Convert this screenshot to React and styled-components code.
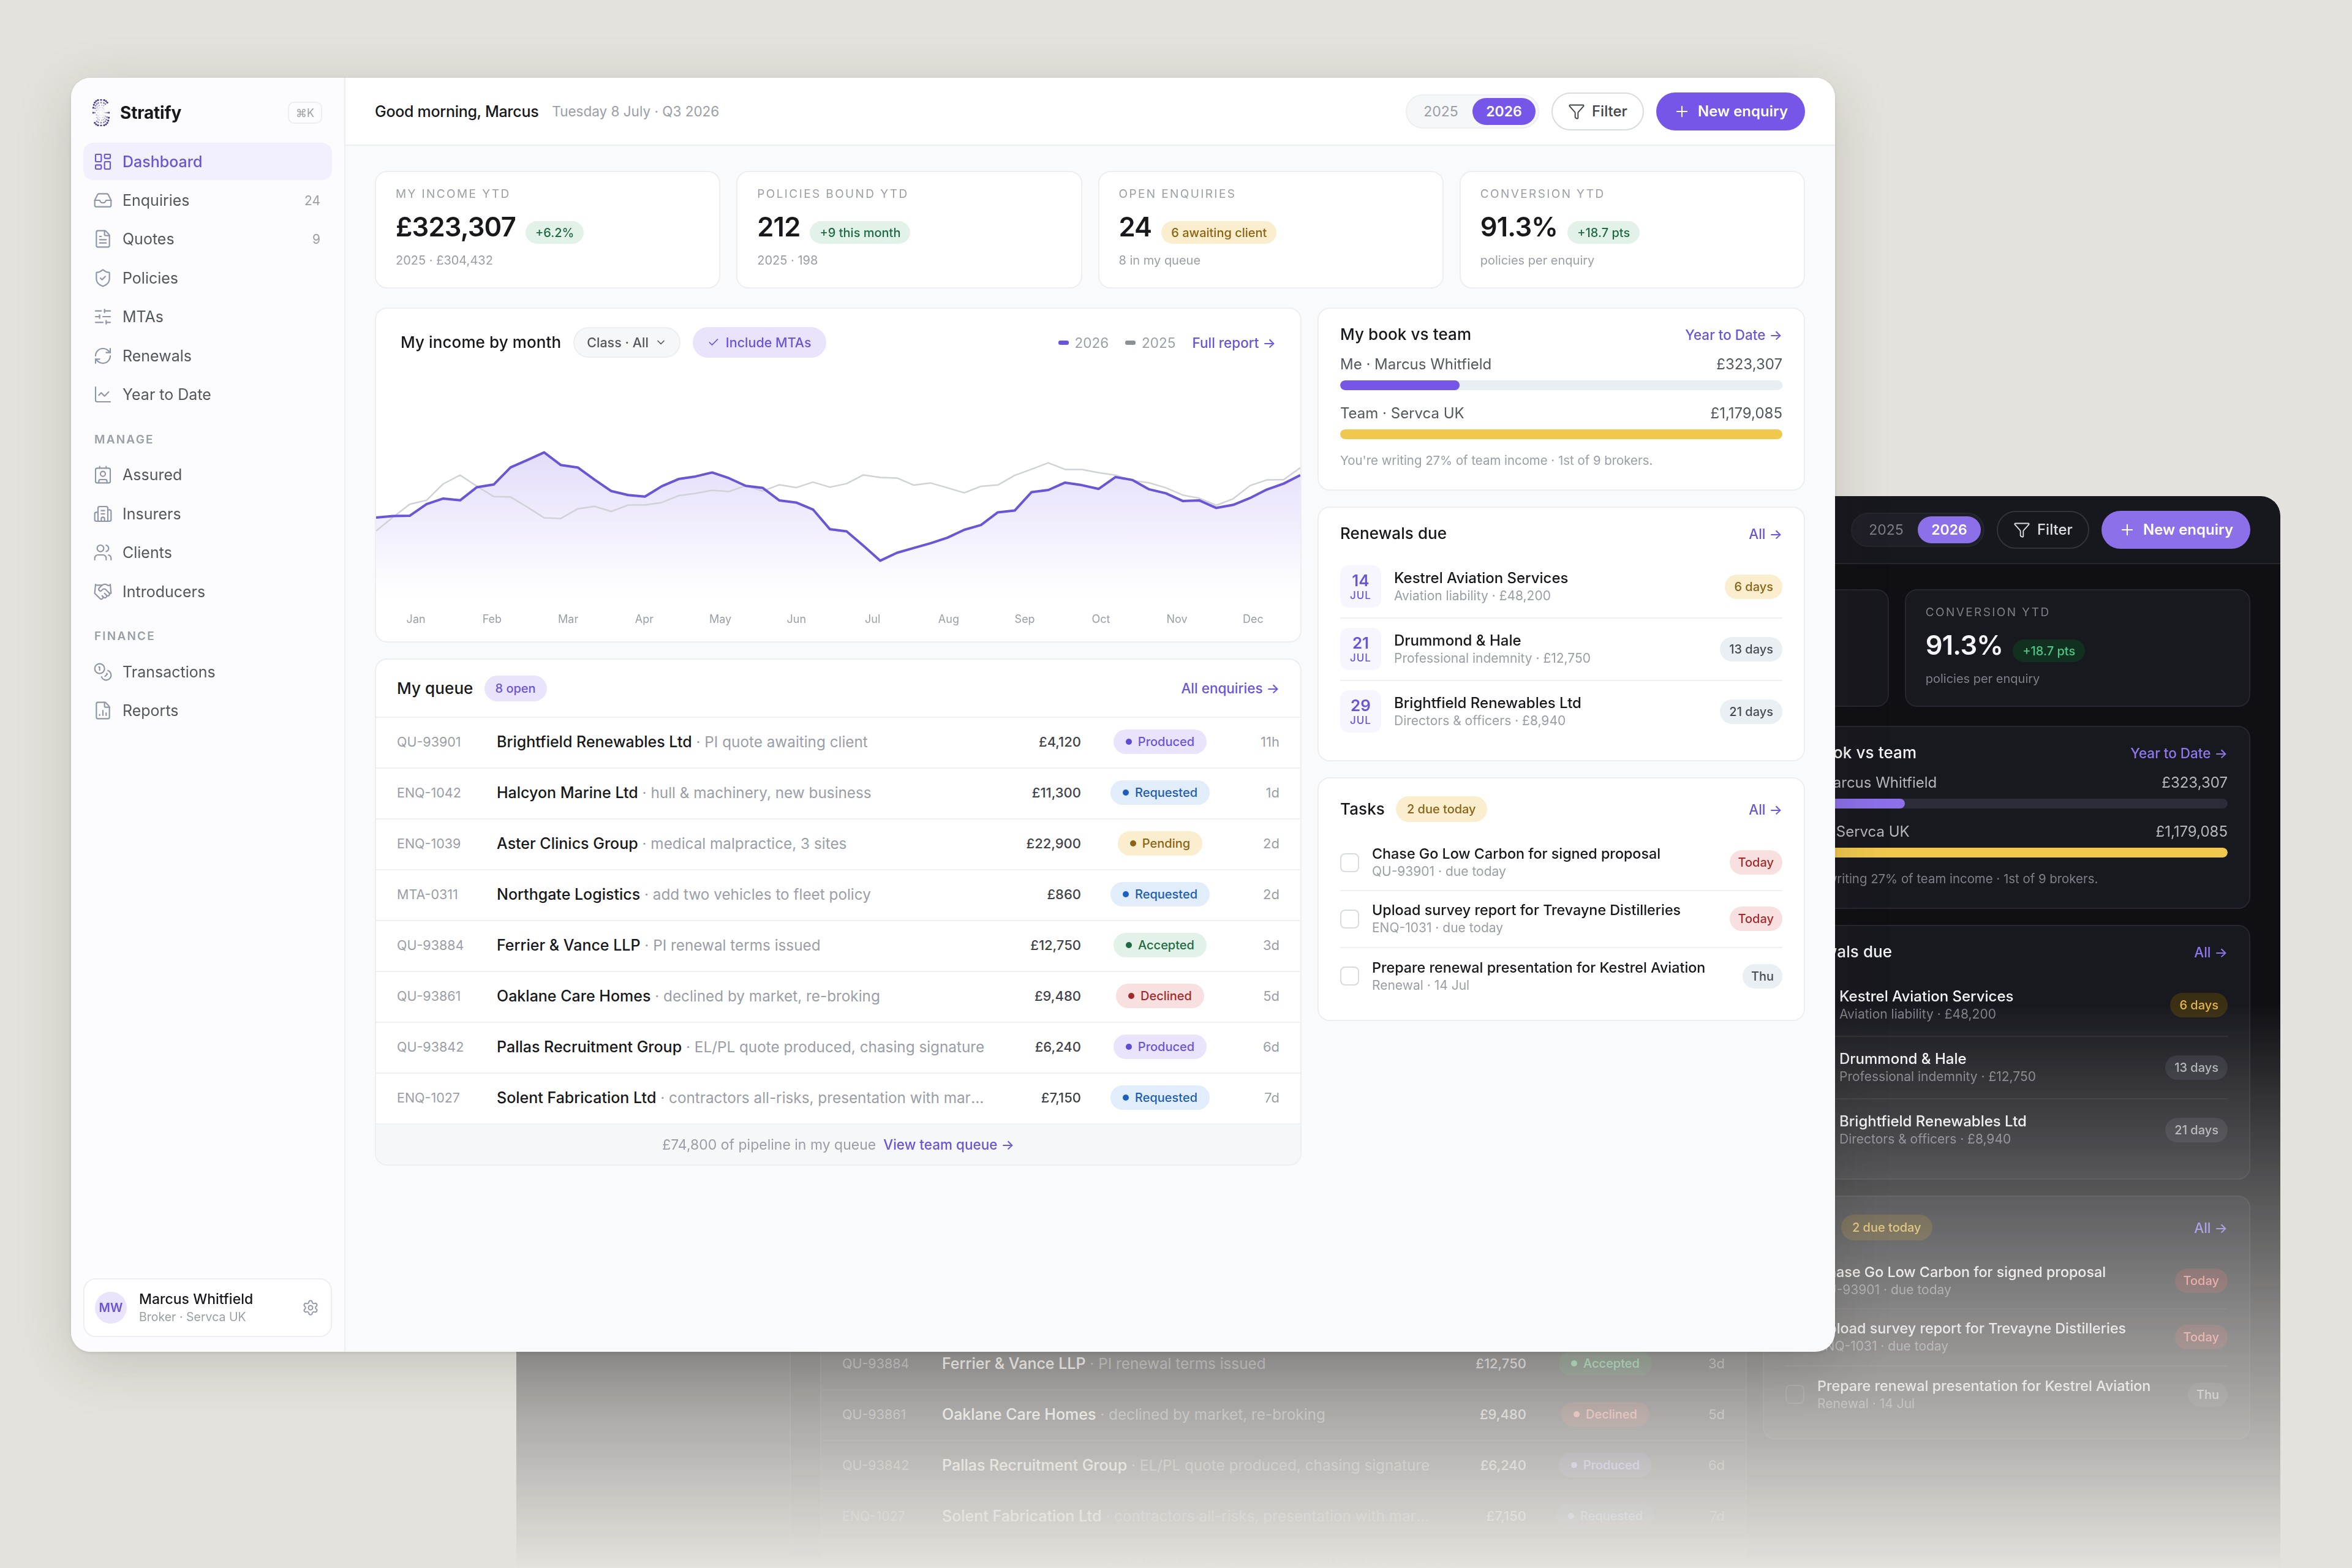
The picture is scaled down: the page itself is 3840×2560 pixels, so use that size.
import React from 'react';
import styled, { createGlobalStyle, ThemeProvider } from 'styled-components';
import {
  LayoutDashboard, Inbox, FileText, ShieldCheck, SlidersHorizontal, RefreshCw, ChartLine,
  Contact, Building2, Users, Handshake, Coins, FileChartColumn, Settings, Funnel, Plus, Check, ChevronDown,
} from 'lucide-react';

const lightTheme = {
  sidebar: '#fcfcfe', bar: '#ffffff', body: '#f9fafb', card: '#ffffff', line: '#eceef1', rowLine: '#eef0f2',
  text: '#17181c', soft: '#53575e', muted: '#9a9ea6', accent: '#6a55d6', primary: '#7556e8', active: '#f2effe',
  toggle: '#f6f7f8', filterLine: '#d8dbdf', filterText: '#3f4349', track: '#e9eef2', amber: '#f0c84e',
  tile: '#f7f5fe', soft2: '#e9e3fc', foot: '#f6f7f9', box: '#d8dbdf', icon: '#8e95a6', amount: '#3f4349', line25: '#cfd2d6',
  tones: {
    violet: ['#e9e3fc', '#6a55d6', '#5f4bd8'], blue: ['#e1edfb', '#1e5cb0', '#1d5fc0'], amber: ['#fbeecf', '#8a6414', '#8a6414'],
    green: ['#e3f2e9', '#1f6a43', '#1f6a43'], red: ['#f9e0e0', '#a32a2a', '#a32a2a'], grey: ['#e9eff3', '#454b52', '#454b52'],
  },
};

const darkTheme = {
  sidebar: '#16161c', bar: '#17171e', body: '#0f0f14', card: '#18181f', line: '#26262e', rowLine: '#26262e',
  text: '#f5f5f7', soft: '#b6b6be', muted: '#7f7f89', accent: '#8f78ee', primary: '#8b70ea', active: '#26223f',
  toggle: '#1f1f27', filterLine: '#33333c', filterText: '#dcdce2', track: '#2c2c38', amber: '#f0c84e',
  tile: '#25223a', soft2: '#2f2950', foot: '#1d1d25', box: '#3a3a44', icon: '#7f7f89', amount: '#c6c6ce', line25: '#5f5f69',
  tones: {
    violet: ['#2f2950', '#a493f2', '#a493f2'], blue: ['#1a2a44', '#7aa8ee', '#7aa8ee'], amber: ['#3a2f12', '#e3b64c', '#e3b64c'],
    green: ['#12301f', '#4fc587', '#4fc587'], red: ['#431c20', '#ef7b7b', '#ef7b7b'], grey: ['#2a2a33', '#b0b0b8', '#b0b0b8'],
  },
};

const GlobalStyle = createGlobalStyle`
  html, body { margin: 0; padding: 0; background: #e4e2dc; }
  * { box-sizing: border-box; }
  body { font-family: Inter, "Liberation Sans", sans-serif; }
`;

const Scene = styled.div`
  position: relative;
  width: 3840px;
  height: 2560px;
  overflow: hidden;
  background: #e4e2dc;
`;

const Win = styled.div`
  display: flex;
  width: 2880px;
  height: 2080px;
  overflow: hidden;
  border-radius: 32px;
  background: ${p => p.theme.body};
  color: ${p => p.theme.text};
`;

const FrontWin = styled(Win)`
  position: absolute;
  left: 116px;
  top: 127px;
  box-shadow: 0 20px 90px rgba(40, 38, 30, 0.17), 0 2px 6px rgba(40, 38, 30, 0.1);
`;

const BackWin = styled(Win)`
  position: absolute;
  left: 843px;
  top: 810px;
  -webkit-mask-image: linear-gradient(to bottom, #000 830px, transparent 1750px);
  mask-image: linear-gradient(to bottom, #000 830px, transparent 1750px);
`;

/* sidebar */
const Sidebar = styled.aside`
  flex: 0 0 448px;
  display: flex;
  flex-direction: column;
  padding: 0 20px 24px;
  background: ${p => p.theme.sidebar};
  border-right: 2px solid ${p => p.theme.line};
`;

const Brand = styled.div`
  flex: 0 0 106px;
  display: flex;
  align-items: center;
  gap: 17px;
  padding: 8px 16px 0 15px;
`;

const BrandName = styled.span`
  flex: 1;
  font-size: 28px;
  font-weight: 700;
  letter-spacing: -0.2px;
`;

const Kbd = styled.span`
  width: 56px;
  height: 36px;
  display: flex;
  align-items: center;
  justify-content: center;
  border: 2px solid ${p => p.theme.line};
  border-radius: 10px;
  font-size: 18px;
  color: ${p => p.theme.muted};
`;

const NavList = styled.nav`
  display: flex;
  flex-direction: column;
  gap: 2px;
`;

const NavItem = styled.a`
  display: flex;
  align-items: center;
  gap: 16px;
  height: 61.4px;
  padding: 0 19px 0 16px;
  border-radius: 16px;
  font-size: 25px;
  font-weight: ${p => (p.$active ? 500 : 400)};
  color: ${p => (p.$active ? p.theme.accent : p.theme.soft)};
  background: ${p => (p.$active ? p.theme.active : 'transparent')};
  svg { color: ${p => (p.$active ? p.theme.accent : p.theme.icon)}; flex: none; }
`;

const NavLabel = styled.span`
  flex: 1;
`;

const NavCount = styled.span`
  font-size: 21px;
  color: ${p => p.theme.muted};
`;

const SectionLabel = styled.div`
  margin: 31px 0 15px;
  padding-left: 18px;
  font-size: 19px;
  line-height: 24px;
  font-weight: 600;
  letter-spacing: 2.2px;
  color: ${p => p.theme.muted};
`;

const UserCard = styled.div`
  margin-top: auto;
  height: 96px;
  display: flex;
  align-items: center;
  gap: 20px;
  padding: 0 19px 0 17px;
  background: ${p => p.theme.card};
  border: 2px solid ${p => p.theme.line};
  border-radius: 20px;
  svg { color: ${p => p.theme.icon}; flex: none; }
`;

const Avatar = styled.div`
  width: 52px;
  height: 52px;
  flex: none;
  border-radius: 50%;
  display: flex;
  align-items: center;
  justify-content: center;
  background: ${p => p.theme.soft2};
  color: ${p => p.theme.accent};
  font-size: 20px;
  font-weight: 600;
`;

const UserText = styled.div`
  flex: 1;
  min-width: 0;
`;

const UserName = styled.div`
  font-size: 23px;
  line-height: 30px;
  font-weight: 500;
`;

const UserRole = styled.div`
  font-size: 19.5px;
  line-height: 28px;
  color: ${p => p.theme.muted};
`;

/* main column */
const Main = styled.main`
  flex: 1;
  min-width: 0;
  display: flex;
  flex-direction: column;
`;

const Topbar = styled.header`
  flex: 0 0 111px;
  display: flex;
  align-items: center;
  padding: 0 49px 0 48px;
  background: ${p => p.theme.bar};
  border-bottom: 2px solid ${p => p.theme.line};
`;

const Greeting = styled.span`
  margin-right: 22px;
  font-size: 25px;
  font-weight: 500;
  letter-spacing: -0.3px;
`;

const DateText = styled.span`
  flex: 1;
  font-size: 22.5px;
  color: ${p => p.theme.muted};
`;

const TopActions = styled.div`
  display: flex;
  align-items: center;
  gap: 20px;
`;

const YearToggle = styled.div`
  display: flex;
  align-items: center;
  height: 56px;
  padding: 4px;
  background: ${p => p.theme.toggle};
  border: 2px solid ${p => p.theme.line};
  border-radius: 28px;
`;

const YearOption = styled.span`
  width: 103px;
  height: 44px;
  display: flex;
  align-items: center;
  justify-content: center;
  border-radius: 22px;
  font-size: 23px;
  font-weight: ${p => (p.$on ? 600 : 400)};
  color: ${p => (p.$on ? '#fff' : p.theme.muted)};
  background: ${p => (p.$on ? p.theme.primary : 'transparent')};
`;

const FilterBtn = styled.button`
  width: 151px;
  height: 62px;
  display: flex;
  align-items: center;
  justify-content: center;
  gap: 11px;
  padding: 0;
  font: 500 24px Inter, sans-serif;
  color: ${p => p.theme.filterText};
  background: ${p => p.theme.bar};
  border: 2px solid ${p => p.theme.filterLine};
  border-radius: 31px;
`;

const PrimaryBtn = styled.button`
  height: 62px;
  display: flex;
  align-items: center;
  gap: 12px;
  padding: 0 28px;
  font: 600 24px Inter, sans-serif;
  color: #fff;
  background: ${p => p.theme.primary};
  border: 0;
  border-radius: 31px;
`;

const Content = styled.div`
  flex: 1;
  padding: 41px 49px 0 48px;
`;

const KpiRow = styled.section`
  display: grid;
  grid-template-columns: repeat(4, 1fr);
  gap: 26px;
  margin-bottom: 31px;
`;

const Card = styled.div`
  background: ${p => p.theme.card};
  border: 2px solid ${p => p.theme.line};
  border-radius: 20px;
`;

const Kpi = styled(Card)`
  height: 192px;
  padding: 24px 32px 0;
`;

const KpiLabel = styled.div`
  font-size: 19px;
  line-height: 24px;
  font-weight: 400;
  letter-spacing: 2.4px;
  color: ${p => p.theme.muted};
`;

const KpiValueRow = styled.div`
  display: flex;
  align-items: flex-end;
  gap: 16px;
  height: 56px;
  margin: 13px 0;
`;

const KpiValue = styled.span`
  font-size: 43.5px;
  line-height: 56px;
  font-weight: 600;
  letter-spacing: -0.8px;
`;

const Chip = styled.span`
  display: inline-flex;
  align-items: center;
  height: ${p => p.$h || 37}px;
  padding: 0 ${p => p.$pad || 16}px;
  border-radius: 21px;
  font-size: 20px;
  font-weight: 500;
  white-space: nowrap;
  background: ${p => p.theme.tones[p.$tone][0]};
  color: ${p => p.theme.tones[p.$tone][1]};
`;

const KpiSub = styled.div`
  font-size: 20px;
  line-height: 28px;
  color: ${p => p.theme.muted};
`;

const Columns = styled.section`
  display: grid;
  grid-template-columns: 1513px 1fr;
  gap: 26px;
  align-items: start;
`;

const Stack = styled.div`
  display: flex;
  flex-direction: column;
  gap: 26px;
`;

/* chart */
const ChartCard = styled(Card)`
  height: 547px;
  overflow: hidden;
  display: flex;
  flex-direction: column;
`;

const ChartHead = styled.div`
  display: flex;
  align-items: center;
  gap: 20px;
  padding: 30px 40px 0;
`;

const PanelTitle = styled.h3`
  margin: 0;
  font-size: 26px;
  line-height: 34px;
  font-weight: 500;
  letter-spacing: 0.1px;
`;

const OptionPill = styled.span`
  height: 50px;
  display: inline-flex;
  align-items: center;
  gap: 10px;
  padding: 0 ${p => (p.$on ? 22 : 20)}px;
  border-radius: 25px;
  font-size: 21.5px;
  font-weight: 500;
  background: ${p => (p.$on ? p.theme.soft2 : p.theme.toggle)};
  color: ${p => (p.$on ? p.theme.accent : p.theme.soft)};
  border: 2px solid ${p => (p.$on ? p.theme.soft2 : p.theme.line)};
`;

const Legend = styled.div`
  margin-left: auto;
  display: flex;
  align-items: center;
  gap: 27px;
`;

const LegendItem = styled.span`
  display: inline-flex;
  align-items: center;
  gap: 10px;
  font-size: 22.5px;
  color: ${p => p.theme.muted};
`;

const Swatch = styled.i`
  width: 17px;
  height: 7px;
  border-radius: 3px;
  background: ${p => (p.$now ? p.theme.accent : '#8a9095')};
`;

const TextLink = styled.a`
  font-size: 22.5px;
  font-weight: 500;
  white-space: nowrap;
  color: ${p => p.theme.accent};
`;

const ChartSvg = styled.svg`
  display: block;
  width: 100%;
  height: 395px;
  margin-top: 6px;
  flex: none;
`;

const IncomeLine25 = styled.path`
  fill: none;
  stroke: ${p => p.theme.line25};
  stroke-width: 2.5;
  stroke-linejoin: round;
`;

const IncomeLine26 = styled.path`
  fill: none;
  stroke: ${p => p.theme.accent};
  stroke-width: 4;
  stroke-linejoin: round;
`;

const Months = styled.div`
  display: grid;
  grid-template-columns: repeat(12, 1fr);
  padding: 14px 15px 0 3px;
  font-size: 18px;
  line-height: 24px;
  text-align: center;
  color: ${p => p.theme.muted};
`;

/* queue */
const QueueHead = styled.div`
  height: 95px;
  display: flex;
  align-items: center;
  justify-content: space-between;
  padding: 0 34px;
  border-bottom: 2px solid ${p => p.theme.rowLine};
`;

const Row = styled.div`
  height: 83px;
  display: flex;
  align-items: center;
  padding: 0 34px 4px;
  border-bottom: 2px solid ${p => p.theme.rowLine};
`;

const RowId = styled.span`
  flex: 0 0 163px;
  font-size: 21.5px;
  color: ${p => p.theme.muted};
`;

const RowMain = styled.span`
  flex: 1;
  min-width: 0;
  padding-right: 10px;
  font-size: 24.3px;
  white-space: nowrap;
  overflow: hidden;
  text-overflow: ellipsis;
  color: ${p => p.theme.muted};
`;

const RowName = styled.span`
  font-size: 25px;
  font-weight: 500;
  color: ${p => p.theme.text};
`;

const RowAmount = styled.span`
  flex: 0 0 140px;
  text-align: right;
  font-size: 22px;
  font-weight: 500;
  color: ${p => p.theme.amount};
`;

const StatusCell = styled.span`
  flex: 0 0 200px;
  margin-left: 29px;
  display: flex;
  justify-content: center;
`;

const Status = styled(Chip)`
  height: 40px;
  gap: 10px;
  padding: 0 20px;
  &::before {
    content: '';
    width: 10px;
    height: 10px;
    border-radius: 50%;
    background: ${p => p.theme.tones[p.$tone][2]};
  }
`;

const RowTime = styled.span`
  flex: 0 0 95px;
  text-align: right;
  font-size: 22px;
  color: ${p => p.theme.muted};
`;

const QueueFoot = styled.div`
  height: 65px;
  display: flex;
  align-items: center;
  justify-content: center;
  gap: 12px;
  font-size: 23px;
  color: ${p => p.theme.muted};
  background: ${p => p.theme.foot};
  border-radius: 0 0 18px 18px;
`;

/* right column */
const SidePanel = styled(Card)`
  padding: 25px 35px ${p => p.$pb}px;
`;

const SideHead = styled.div`
  display: flex;
  align-items: center;
  justify-content: space-between;
  min-height: 34px;
`;

const TaskHead = styled(SideHead)`
  height: 42px;
  margin: 4px 0 21px;
`;

const TitleGroup = styled.div`
  display: flex;
  align-items: center;
  gap: 18px;
`;

const MeterRow = styled.div`
  display: flex;
  justify-content: space-between;
  margin-top: ${p => p.$mt}px;
  font-size: 24px;
  line-height: 30px;
  color: ${p => p.theme.soft};
`;

const Track = styled.div`
  height: 16px;
  margin-top: 11px;
  border-radius: 8px;
  overflow: hidden;
  background: ${p => p.theme.track};
`;

const Fill = styled.div`
  height: 100%;
  border-radius: 8px;
  background: ${p => (p.$amber ? p.theme.amber : p.theme.primary)};
`;

const Note = styled.p`
  margin: 20px 0 0;
  font-size: 20.4px;
  line-height: 30px;
  color: ${p => p.theme.muted};
`;

const RenewalList = styled.div`
  margin-top: 19px;
`;

const Renewal = styled.div`
  display: flex;
  align-items: center;
  gap: 21px;
  padding: 16px 0;
  border-bottom: ${p => (p.$last ? 'none' : `2px solid ${p.theme.rowLine}`)};
  margin-bottom: ${p => (p.$last ? 0 : '-1px')};
`;

const DateTile = styled.div`
  flex: 0 0 67px;
  height: 69px;
  display: flex;
  flex-direction: column;
  align-items: center;
  justify-content: center;
  border-radius: 14px;
  background: ${p => p.theme.tile};
  color: ${p => p.theme.accent};
`;

const TileDay = styled.span`
  font-size: 26px;
  line-height: 28px;
  font-weight: 600;
`;

const TileMonth = styled.span`
  font-size: 17px;
  line-height: 20px;
  font-weight: 500;
  letter-spacing: 1px;
`;

const ItemText = styled.div`
  flex: 1;
  min-width: 0;
`;

const ItemTitle = styled.div`
  font-size: ${p => p.$size || 24}px;
  line-height: 29px;
  font-weight: 500;
`;

const ItemSub = styled.div`
  font-size: 21px;
  line-height: 29px;
  color: ${p => p.theme.muted};
`;

const TaskRow = styled.div`
  height: 92.3px;
  display: flex;
  align-items: center;
  gap: 21px;
  border-bottom: ${p => (p.$last ? 'none' : `2px solid ${p.theme.rowLine}`)};
`;

const CheckBox = styled.span`
  flex: 0 0 31px;
  height: 31px;
  border: 2px solid ${p => p.theme.box};
  border-radius: 8px;
`;

const nav = [
  [LayoutDashboard, 'Dashboard'], [Inbox, 'Enquiries', 24], [FileText, 'Quotes', 9], [ShieldCheck, 'Policies'],
  [SlidersHorizontal, 'MTAs'], [RefreshCw, 'Renewals'], [ChartLine, 'Year to Date'],
];
const manageNav = [[Contact, 'Assured'], [Building2, 'Insurers'], [Users, 'Clients'], [Handshake, 'Introducers']];
const financeNav = [[Coins, 'Transactions'], [FileChartColumn, 'Reports']];

const kpis = [
  { label: 'MY INCOME YTD', value: '£323,307', chip: '+6.2%', tone: 'green', sub: '2025 · £304,432' },
  { label: 'POLICIES BOUND YTD', value: '212', chip: '+9 this month', tone: 'green', sub: '2025 · 198' },
  { label: 'OPEN ENQUIRIES', value: '24', chip: '6 awaiting client', tone: 'amber', sub: '8 in my queue' },
  { label: 'CONVERSION YTD', value: '91.3%', chip: '+18.7 pts', tone: 'green', sub: 'policies per enquiry' },
];

const queue = [
  ['QU-93901', 'Brightfield Renewables Ltd', 'PI quote awaiting client', '£4,120', 'Produced', 'violet', '11h'],
  ['ENQ-1042', 'Halcyon Marine Ltd', 'hull & machinery, new business', '£11,300', 'Requested', 'blue', '1d'],
  ['ENQ-1039', 'Aster Clinics Group', 'medical malpractice, 3 sites', '£22,900', 'Pending', 'amber', '2d'],
  ['MTA-0311', 'Northgate Logistics', 'add two vehicles to fleet policy', '£860', 'Requested', 'blue', '2d'],
  ['QU-93884', 'Ferrier & Vance LLP', 'PI renewal terms issued', '£12,750', 'Accepted', 'green', '3d'],
  ['QU-93861', 'Oaklane Care Homes', 'declined by market, re-broking', '£9,480', 'Declined', 'red', '5d'],
  ['QU-93842', 'Pallas Recruitment Group', 'EL/PL quote produced, chasing signature', '£6,240', 'Produced', 'violet', '6d'],
  ['ENQ-1027', 'Solent Fabrication Ltd', 'contractors all-risks, presentation with markets this week', '£7,150', 'Requested', 'blue', '7d'],
];

const renewals = [
  ['14', 'Kestrel Aviation Services', 'Aviation liability · £48,200', '6 days', 'amber'],
  ['21', 'Drummond & Hale', 'Professional indemnity · £12,750', '13 days', 'grey'],
  ['29', 'Brightfield Renewables Ltd', 'Directors & officers · £8,940', '21 days', 'grey'],
];

const tasks = [
  ['Chase Go Low Carbon for signed proposal', 'QU-93901 · due today', 'Today', 'red'],
  ['Upload survey report for Trevayne Distilleries', 'ENQ-1031 · due today', 'Today', 'red'],
  ['Prepare renewal presentation for Kestrel Aviation', 'Renewal · 14 Jul', 'Thu', 'grey'],
];

const months = ['Jan', 'Feb', 'Mar', 'Apr', 'May', 'Jun', 'Jul', 'Aug', 'Sep', 'Oct', 'Nov', 'Dec'];

// line heights read off the chart, 56 points across the card
const income26 = [966, 959, 958, 905, 879, 887, 827, 815, 737, 703, 668, 726, 737, 793, 845, 863, 870, 823, 790, 778, 760, 786, 821, 830, 888, 897, 929, 1019, 1029, 1095, 1163, 1127, 1105, 1083, 1058, 1022, 1000, 942, 934, 850, 840, 806, 818, 835, 781, 794, 837, 855, 890, 888, 922, 908, 877, 838, 811, 772];
const income25 = [1027, 965, 905, 887, 812, 772, 823, 870, 872, 918, 967, 970, 926, 915, 938, 909, 909, 897, 866, 855, 841, 847, 820, 845, 816, 829, 804, 827, 811, 771, 783, 785, 818, 808, 830, 853, 823, 817, 773, 745, 716, 746, 746, 761, 772, 797, 807, 830, 863, 878, 910, 880, 820, 794, 793, 738];

const CHART_W = 1509;
const CHART_H = 395;
const toPath = list => list.map((v, i) => `${i ? 'L' : 'M'}${((i * CHART_W) / (list.length - 1)).toFixed(1)} ${(v / 2.8 - 90).toFixed(1)}`).join(' ');

const logoDots = [];
[0.22, 0.4, 0.58, 0.78, 1].forEach(r => {
  const n = Math.round(8 + r * 16);
  for (let i = 0; i < n; i++) {
    const a = (i / n) * Math.PI * 2;
    const c = Math.cos(a);
    const s = Math.sin(a);
    if (r > 0.55 && c > 0.4 && s < -0.1 && s > -0.7) continue;
    if (r > 0.75 && c < -0.4 && s > 0.1 && s < 0.7) continue;
    // squarer than an ellipse, the mark has flat top and bottom rows
    const px = Math.sign(c) * Math.pow(Math.abs(c), 0.7);
    const py = Math.sign(s) * Math.pow(Math.abs(s), 0.7);
    logoDots.push({ x: 14 + 13 * r * px, y: 22 + 21 * r * py, r: 0.5 + r * 1.1, o: 0.08 + 0.92 * r * r });
  }
});

function Logo() {
  return (
    <svg width="28" height="44" viewBox="0 0 28 44" aria-hidden="true">
      {logoDots.map((d, i) => (
        <circle key={i} cx={d.x} cy={d.y} r={d.r} fill="#43388f" opacity={d.o} />
      ))}
    </svg>
  );
}

function NavGroup({ items, activeLabel }) {
  return (
    <NavList>
      {items.map(([Icon, label, count]) => (
        <NavItem key={label} $active={label === activeLabel}>
          <Icon size={32} strokeWidth={1.6} />
          <NavLabel>{label}</NavLabel>
          {count && <NavCount>{count}</NavCount>}
        </NavItem>
      ))}
    </NavList>
  );
}

function IncomeChart({ id }) {
  const top = toPath(income26);
  return (
    <ChartSvg viewBox={`0 0 ${CHART_W} ${CHART_H}`} preserveAspectRatio="none" aria-hidden="true">
      <defs>
        <linearGradient id={id} gradientUnits="userSpaceOnUse" x1="0" y1="148" x2="0" y2="385">
          <stop offset="0" stopColor="#7556e8" stopOpacity="0.2" />
          <stop offset="1" stopColor="#7556e8" stopOpacity="0" />
        </linearGradient>
      </defs>
      <path d={`${top} L${CHART_W} ${CHART_H} L0 ${CHART_H} Z`} fill={`url(#${id})`} />
      <IncomeLine25 d={toPath(income25)} />
      <IncomeLine26 d={top} />
    </ChartSvg>
  );
}

function Dashboard({ chartId }) {
  return (
    <>
      <Sidebar>
        <Brand>
          <Logo />
          <BrandName>Stratify</BrandName>
          <Kbd>⌘K</Kbd>
        </Brand>
        <NavGroup items={nav} activeLabel="Dashboard" />
        <SectionLabel>MANAGE</SectionLabel>
        <NavGroup items={manageNav} />
        <SectionLabel>FINANCE</SectionLabel>
        <NavGroup items={financeNav} />
        <UserCard>
          <Avatar>MW</Avatar>
          <UserText>
            <UserName>Marcus Whitfield</UserName>
            <UserRole>Broker · Servca UK</UserRole>
          </UserText>
          <Settings size={28} strokeWidth={1.6} />
        </UserCard>
      </Sidebar>
      <Main>
        <Topbar>
          <Greeting>Good morning, Marcus</Greeting>
          <DateText>Tuesday 8 July · Q3 2026</DateText>
          <TopActions>
            <YearToggle>
              <YearOption>2025</YearOption>
              <YearOption $on>2026</YearOption>
            </YearToggle>
            <FilterBtn><Funnel size={28} strokeWidth={1.6} />Filter</FilterBtn>
            <PrimaryBtn><Plus size={28} strokeWidth={1.8} />New enquiry</PrimaryBtn>
          </TopActions>
        </Topbar>
        <Content>
          <KpiRow>
            {kpis.map(k => (
              <Kpi key={k.label}>
                <KpiLabel>{k.label}</KpiLabel>
                <KpiValueRow>
                  <KpiValue>{k.value}</KpiValue>
                  <Chip $tone={k.tone}>{k.chip}</Chip>
                </KpiValueRow>
                <KpiSub>{k.sub}</KpiSub>
              </Kpi>
            ))}
          </KpiRow>
          <Columns>
            <Stack>
              <ChartCard>
                <ChartHead>
                  <PanelTitle>My income by month</PanelTitle>
                  <OptionPill>Class · All <ChevronDown size={20} strokeWidth={2} /></OptionPill>
                  <OptionPill $on><Check size={20} strokeWidth={2} />Include MTAs</OptionPill>
                  <Legend>
                    <LegendItem><Swatch $now />2026</LegendItem>
                    <LegendItem><Swatch />2025</LegendItem>
                    <TextLink>Full report →</TextLink>
                  </Legend>
                </ChartHead>
                <IncomeChart id={chartId} />
                <Months>{months.map(m => <span key={m}>{m}</span>)}</Months>
              </ChartCard>
              <Card>
                <QueueHead>
                  <TitleGroup>
                    <PanelTitle>My queue</PanelTitle>
                    <Chip $tone="violet" $h={42} $pad={18}>8 open</Chip>
                  </TitleGroup>
                  <TextLink>All enquiries →</TextLink>
                </QueueHead>
                {queue.map(([id, name, detail, amount, status, tone, time]) => (
                  <Row key={id}>
                    <RowId>{id}</RowId>
                    <RowMain><RowName>{name}</RowName> · {detail}</RowMain>
                    <RowAmount>{amount}</RowAmount>
                    <StatusCell><Status $tone={tone}>{status}</Status></StatusCell>
                    <RowTime>{time}</RowTime>
                  </Row>
                ))}
                <QueueFoot>£74,800 of pipeline in my queue <TextLink>View team queue →</TextLink></QueueFoot>
              </Card>
            </Stack>
            <Stack>
              <SidePanel $pb={32}>
                <SideHead>
                  <PanelTitle>My book vs team</PanelTitle>
                  <TextLink>Year to Date →</TextLink>
                </SideHead>
                <MeterRow $mt={17}><span>Me · Marcus Whitfield</span><span>£323,307</span></MeterRow>
                <Track><Fill style={{ width: '27%' }} /></Track>
                <MeterRow $mt={23}><span>Team · Servca UK</span><span>£1,179,085</span></MeterRow>
                <Track><Fill $amber style={{ width: '100%' }} /></Track>
                <Note>You're writing 27% of team income · 1st of 9 brokers.</Note>
              </SidePanel>
              <SidePanel $pb={29}>
                <SideHead>
                  <PanelTitle>Renewals due</PanelTitle>
                  <TextLink>All →</TextLink>
                </SideHead>
                <RenewalList>
                  {renewals.map(([day, name, sub, left, tone], i) => (
                    <Renewal key={name} $last={i === renewals.length - 1}>
                      <DateTile><TileDay>{day}</TileDay><TileMonth>JUL</TileMonth></DateTile>
                      <ItemText>
                        <ItemTitle>{name}</ItemTitle>
                        <ItemSub>{sub}</ItemSub>
                      </ItemText>
                      <Chip $tone={tone} $h={40} $pad={15}>{left}</Chip>
                    </Renewal>
                  ))}
                </RenewalList>
              </SidePanel>
              <SidePanel $pb={25}>
                <TaskHead>
                  <TitleGroup>
                    <PanelTitle>Tasks</PanelTitle>
                    <Chip $tone="amber" $h={42} $pad={18}>2 due today</Chip>
                  </TitleGroup>
                  <TextLink>All →</TextLink>
                </TaskHead>
                {tasks.map(([title, sub, when, tone], i) => (
                  <TaskRow key={title} $last={i === tasks.length - 1}>
                    <CheckBox />
                    <ItemText>
                      <ItemTitle $size={23.3}>{title}</ItemTitle>
                      <ItemSub>{sub}</ItemSub>
                    </ItemText>
                    <Chip $tone={tone} $h={40} $pad={14}>{when}</Chip>
                  </TaskRow>
                ))}
              </SidePanel>
            </Stack>
          </Columns>
        </Content>
      </Main>
    </>
  );
}

export default function App() {
  return (
    <Scene>
      <GlobalStyle />
      <ThemeProvider theme={darkTheme}>
        <BackWin><Dashboard chartId="fillDark" /></BackWin>
      </ThemeProvider>
      <ThemeProvider theme={lightTheme}>
        <FrontWin><Dashboard chartId="fillLight" /></FrontWin>
      </ThemeProvider>
    </Scene>
  );
}
